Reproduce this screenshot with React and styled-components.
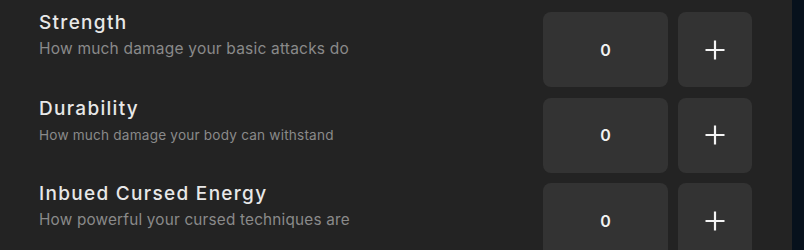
import React from 'react'
import styled, { createGlobalStyle } from 'styled-components'

const GlobalStyle = createGlobalStyle`
  html, body {
    margin: 0;
    padding: 0;
    height: 100%;
    background: #07111c;
    overflow: hidden;
  }
  #root {
    height: 100%;
  }
`

const Panel = styled.div`
  width: 792px;
  height: 100%;
  box-sizing: border-box;
  background: #232323;
  padding: 12px 40px 0 39px;
  display: flex;
  flex-direction: column;
  gap: 10.5px;
  font-family: Inter, 'Noto Sans', sans-serif;
`

const Row = styled.div`
  display: flex;
  align-items: flex-start;
  justify-content: space-between;
  flex-shrink: 0;
`

const Info = styled.div`
  display: flex;
  flex-direction: column;
`

const Title = styled.div`
  margin-top: 0;
  font-size: 19px;
  line-height: 22px;
  font-weight: 500;
  letter-spacing: 1.3px;
  color: #e8e8e8;
`

const Description = styled.div`
  margin-top: 5px;
  font-size: ${(p) => p.$size || 15.5}px;
  line-height: 20px;
  letter-spacing: 0.2px;
  color: #8a8a8a;
`

const Controls = styled.div`
  display: flex;
  gap: 10px;
`

const Tile = styled.div`
  width: ${(p) => p.$width}px;
  height: 75px;
  border-radius: 8px;
  background: #333333;
  display: flex;
  align-items: center;
  justify-content: center;
  color: #f2f2f2;
`

const Value = styled.span`
  font-size: 16px;
  font-weight: 600;
`

const PlusIcon = () => (
  <svg width="20" height="20" viewBox="0 0 20 20">
    <path d="M10 0.5V19.5M0.5 10H19.5" stroke="#f4f4f4" strokeWidth="2.2" />
  </svg>
)

const stats = [
  { name: 'Strength', desc: 'How much damage your basic attacks do', value: 0 },
  { name: 'Durability', desc: 'How much damage your body can withstand', value: 0, size: 13.6 },
  { name: 'Inbued Cursed Energy', desc: 'How powerful your cursed techniques are', value: 0, size: 15.3 }
]

export default function App() {
  return (
    <>
      <GlobalStyle />
      <Panel>
        {stats.map((s) => (
          <Row key={s.name}>
            <Info>
              <Title>{s.name}</Title>
              <Description $size={s.size}>{s.desc}</Description>
            </Info>
            <Controls>
              <Tile $width={125}>
                <Value>{s.value}</Value>
              </Tile>
              <Tile $width={74}>
                <PlusIcon />
              </Tile>
            </Controls>
          </Row>
        ))}
      </Panel>
    </>
  )
}
